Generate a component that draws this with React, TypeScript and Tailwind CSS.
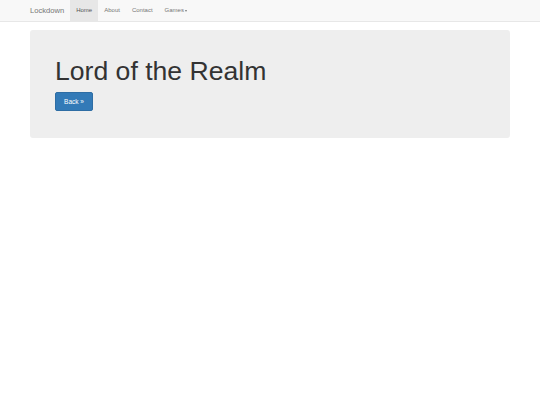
import React from 'react';

const App: React.FC = () => {
  return (
    <div className="min-h-screen bg-white font-['Liberation_Sans',Arial,sans-serif]">
      {/* Barra de navegación */}
      <nav className="h-[22px] bg-[#f8f8f8] border-b border-[#e7e7e7]">
        <div className="mx-[30px] flex h-[21px] items-stretch">
          <span className="flex items-center pr-[6px] text-[7.6px] font-normal text-[#777]">Lockdown</span>
          <ul className="flex items-stretch text-[6px] text-[#777]">
            <li className="flex items-center bg-[#e7e7e7] px-[6px] text-[#555]">Home</li>
            <li className="flex items-center px-[6px]">About</li>
            <li className="flex items-center px-[6px]">Contact</li>
            <li className="flex items-center px-[6px]">
              Games
              <span className="ml-[1px] inline-block border-x-[1.5px] border-t-[2px] border-x-transparent border-t-[#777]"></span>
            </li>
          </ul>
        </div>
      </nav>

      {/* Jumbotron */}
      <div className="mx-[30px] mt-[8px] rounded-[3px] bg-[#eeeeee] px-[25px] pt-[27px] pb-[27px]">
        <h1 className="text-[26.6px] leading-[1.1] text-[#333]">Lord of the Realm</h1>
        <button
          type="button"
          className="mt-[6px] flex h-[19px] w-[38px] items-center justify-center rounded-[2px] border border-[#2e6da4] bg-[#337ab7] text-[6.5px] text-white"
        >
          Back »
        </button>
      </div>
    </div>
  );
};

export default App;
